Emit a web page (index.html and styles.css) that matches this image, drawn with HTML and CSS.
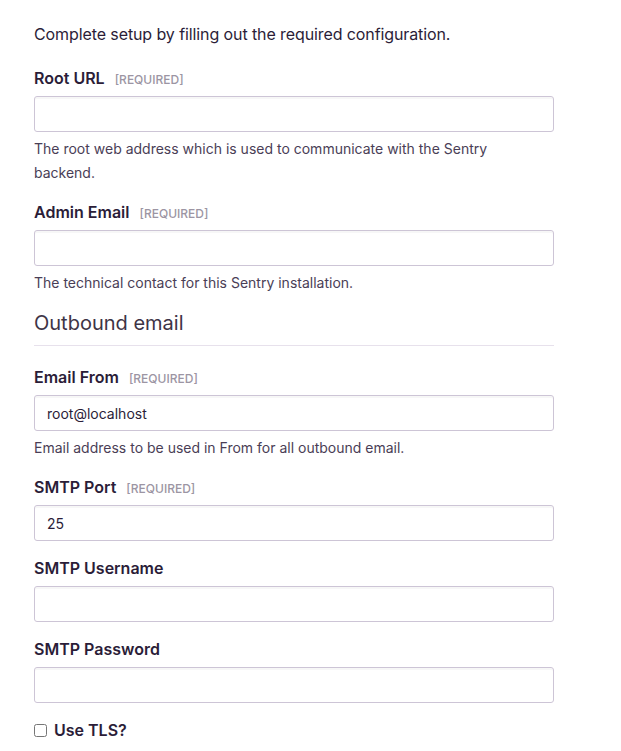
FILE: index.html
```html
<!DOCTYPE html>
<html>
<head>
<meta charset="utf-8">
<link rel="stylesheet" href="styles.css">
</head>
<body>
<div class="page">
  <p class="intro">Complete setup by filling out the required configuration.</p>

  <div class="field">
    <label class="label">Root URL <span class="req">[required]</span></label>
    <input class="input" type="text" value="">
    <p class="help">The root web address which is used to communicate with the Sentry backend.</p>
  </div>

  <div class="field">
    <label class="label">Admin Email <span class="req">[required]</span></label>
    <input class="input" type="text" value="">
    <p class="help">The technical contact for this Sentry installation.</p>
  </div>

  <h3 class="section">Outbound email</h3>

  <div class="field">
    <label class="label">Email From <span class="req">[required]</span></label>
    <input class="input" type="text" value="root@localhost">
    <p class="help">Email address to be used in From for all outbound email.</p>
  </div>

  <div class="field">
    <label class="label">SMTP Port <span class="req">[required]</span></label>
    <input class="input" type="text" value="25">
  </div>

  <div class="field">
    <label class="label">SMTP Username</label>
    <input class="input" type="text" value="">
  </div>

  <div class="field">
    <label class="label">SMTP Password</label>
    <input class="input" type="password" value="">
  </div>

  <div class="check">
    <input type="checkbox" class="checkbox">
    <span class="check-label">Use TLS?</span>
  </div>
</div>
</body>
</html>
```
FILE: styles.css
```css
* { box-sizing: border-box; }
body {
  margin: 0;
  background: #fff;
  font-family: "Inter", "Noto Sans", sans-serif;
  color: #2b1d38;
}
.page {
  width: 520px;
  margin-left: 34px;
  padding-top: 22px;
}
.intro {
  margin: 0 0 22px;
  font-size: 16px;
  line-height: 24px;
  letter-spacing: -0.1px;
  color: #2b1d38;
}
.field {
  display: flex;
  flex-direction: column;
  margin-bottom: 17px;
}
.label {
  display: block;
  height: 20px;
  font-size: 16px;
  line-height: 20px;
  font-weight: 600;
  margin-bottom: 8px;
  color: #2b1d38;
}
.req {
  margin-left: 6px;
  font-size: 12px;
  line-height: 1;
  font-weight: 500;
  text-transform: uppercase;
  color: #9c95a3;
}
.input {
  display: block;
  width: 520px;
  height: 36px;
  border: 1px solid #cdc5d6;
  border-radius: 3px;
  padding: 0 12px;
  font-family: inherit;
  font-size: 14px;
  color: #2b1d38;
  background: #fff;
  box-shadow: inset 0 2px 0 rgba(0,0,0,0.03);
  outline: none;
}
.help {
  margin: 5px 0 0;
  max-width: 500px;
  font-size: 14px;
  line-height: 24px;
  color: #4a3e56;
}
.section {
  margin: -3px 0 21px;
  padding: 0 0 8px;
  font-size: 20px;
  line-height: 28px;
  font-weight: 400;
  color: #3e3446;
  border-bottom: 1px solid #e7e1ec;
}
.check {
  display: flex;
  align-items: center;
  gap: 7px;
  height: 20px;
}
.checkbox {
  margin: 0;
  width: 13px;
  height: 13px;
}
.check-label {
  font-size: 16px;
  font-weight: 600;
  line-height: 20px;
}
```
